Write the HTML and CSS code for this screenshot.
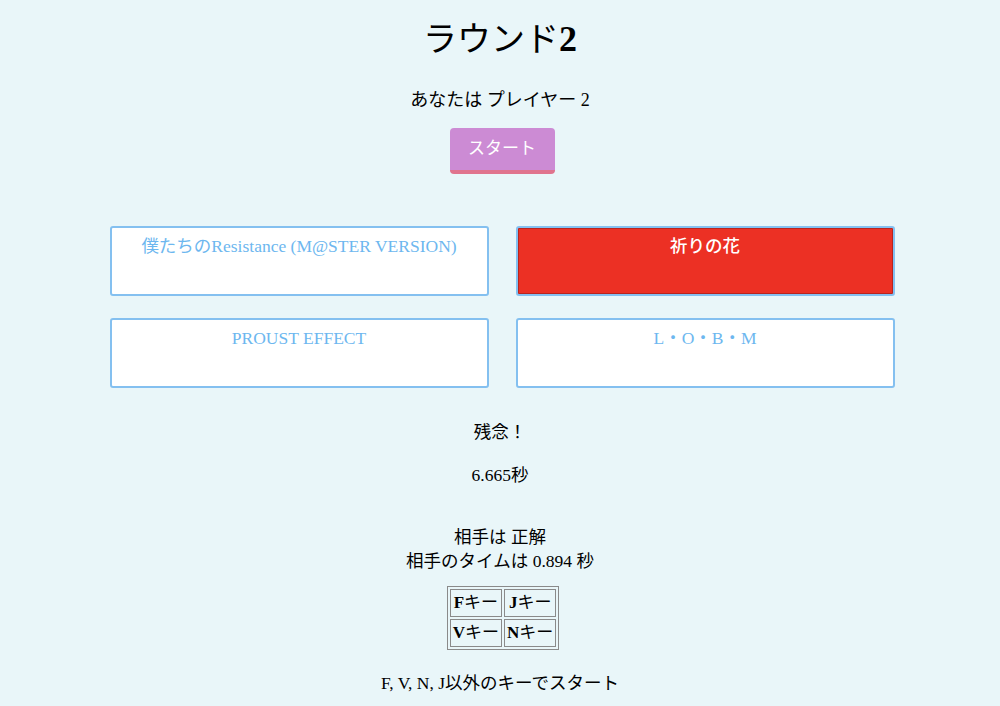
FILE: index.html
```html
<!DOCTYPE html>
<html lang="ja">
<head>
<meta charset="utf-8">
<title>ラウンド2</title>
<link rel="stylesheet" href="styles.css">
</head>
<body>
  <h1 class="title">ラウンド<b>2</b></h1>
  <p class="player">あなたは プレイヤー 2</p>
  <div class="start-wrap"><button class="start">スタート</button></div>
  <div class="choices">
    <div class="choice">僕たちのResistance (M@STER VERSION)</div>
    <div class="choice choice-wrong">祈りの花</div>
    <div class="choice">PROUST EFFECT</div>
    <div class="choice">L・O・B・M</div>
  </div>
  <p class="result">残念！</p>
  <p class="time">6.665秒</p>
  <div class="opponent">
    <div class="line">相手は 正解</div>
    <div class="line">相手のタイムは 0.894 秒</div>
  </div>
  <table class="keys">
    <tr><td><b>F</b>キー</td><td><b>J</b>キー</td></tr>
    <tr><td><b>V</b>キー</td><td><b>N</b>キー</td></tr>
  </table>
  <p class="hint">F, V, N, J以外のキーでスタート</p>
</body>
</html>
```

FILE: styles.css
```css
html, body {
  margin: 0;
  padding: 0;
}
body {
  background: #e9f6f9;
  color: #000;
  font-family: "Liberation Serif", "Noto Sans CJK JP", serif;
  font-size: 17.5px;
  text-align: center;
  padding-top: 21px;
}
.title {
  margin: 0;
  font-size: 34px;
  line-height: 37px;
  font-weight: normal;
}
.title b {
  font-weight: bold;
  font-size: 36px;
}
.player {
  margin: 29px 0 0;
  font-size: 18px;
  line-height: 26px;
}
.start-wrap {
  margin-top: 15px;
  height: 46px;
}
.start {
  height: 46px;
  width: 105px;
  padding: 0;
  margin: 0;
  border: none;
  border-bottom: 4px solid #e0748e;
  border-radius: 4px;
  background: #cc8bd4;
  color: #fff;
  font-family: "Liberation Serif", "Noto Sans CJK JP", serif;
  font-size: 17px;
  line-height: 42px;
  transform: translateX(2px);
}
.choices {
  margin: 52px auto 0;
  width: 785px;
  display: grid;
  grid-template-columns: 379px 379px;
  grid-auto-rows: 70px;
  column-gap: 27px;
  row-gap: 22px;
  transform: translateX(2px);
}
.choice {
  box-sizing: border-box;
  background: #fff;
  border: 2px solid #84c0f0;
  border-radius: 3px;
  color: #6db7ef;
  padding-top: 6px;
  line-height: 24px;
  font-size: 17.5px;
}
.choice-wrong {
  background: #ec3024;
  color: #fff;
  font-weight: 500;
  box-shadow: inset 0 0 0 1px #b8241e;
}
.result {
  margin: 32px 0 0;
  line-height: 24px;
}
.time {
  margin: 19px 0 0;
  line-height: 24px;
}
.opponent {
  margin-top: 38px;
}
.opponent .line {
  line-height: 24px;
}
.keys {
  margin: 13px auto 0;
  border: 1px solid #8a8a8a;
  border-spacing: 2px;
  transform: translateX(3px);
}
.keys td {
  border: 1px solid #8a8a8a;
  padding: 0 2px;
  height: 26px;
  line-height: 24px;
  font-size: 17px;
}
.hint {
  margin: 21px 0 0;
  line-height: 24px;
}
```
